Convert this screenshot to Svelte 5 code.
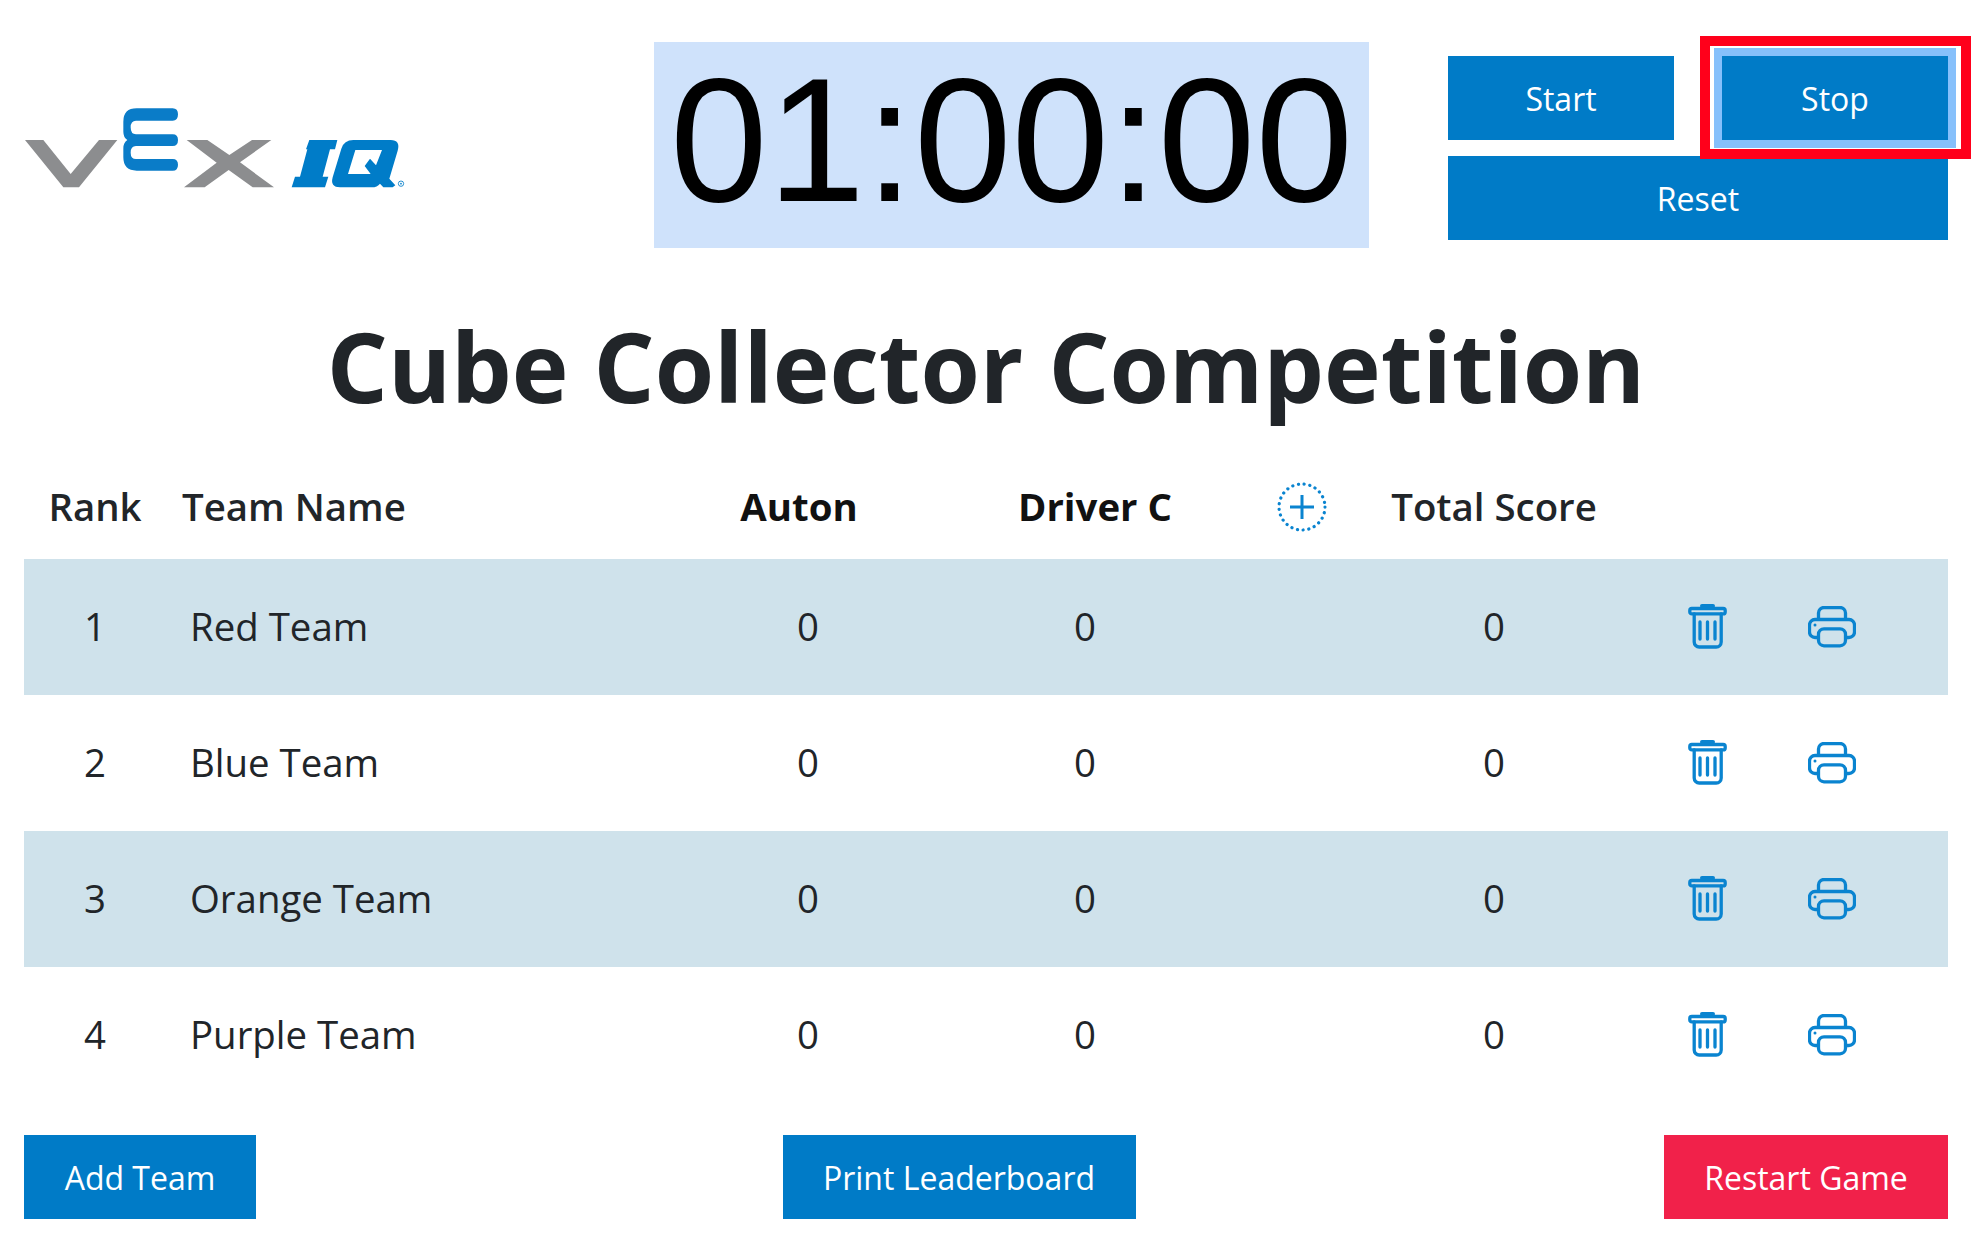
<script>
  const teams = ['Red Team', 'Blue Team', 'Orange Team', 'Purple Team'];
</script>

<main class="page">
  <header class="top">
    <div class="logo">
      <svg width="440" height="140" viewBox="0 0 1320 420" aria-label="VEX IQ">
        <path fill="#8c8d8f" d="M75 180H130L212 282L297 180H352L237 322H190Z" />
        <path fill="#8c8d8f" d="M560 180H622L688 225L756 180H814L720 247L822 322H758L686 270L614 322H552L650 248Z" />
        <path fill="#0a7cc8" d="M518 85Q534 85 534 103Q534 122 518 122H408Q392 122 392 142Q392 163 408 163H518Q534 163 534 180Q534 198 518 198H408Q392 198 392 218Q392 237 408 237H518Q534 237 534 254Q534 272 518 272H410Q370 272 370 232V205Q370 188 382 180Q370 172 370 155V125Q370 85 410 85Z" />
        <path fill="#007cc8" d="M928 180H1012L1005 208H990L968 290H985L975 322H875L885 290H900L922 208H918Z" />
        <path fill="#007cc8" fill-rule="evenodd" d="M1060 180H1172Q1202 180 1193 212L1168 296L1186 316L1178 322H1150L1140 311Q1132 322 1115 322H1020Q990 322 998 292L1024 206Q1032 180 1060 180ZM1066 210L1044 282H1112L1094 258L1110 236L1128 256L1146 210Z" />
        <circle cx="1203" cy="311" r="8" fill="none" stroke="#007cc8" stroke-width="2.5" />
        <circle cx="1203" cy="311" r="2.5" fill="#007cc8" />
      </svg>
    </div>

    <div class="timer">01:00:00</div>

    <div class="controls">
      <button class="btn">Start</button>
      <div class="stop">
        <button class="btn focused">Stop</button>
        <span class="highlight"></span>
      </div>
      <button class="btn wide">Reset</button>
    </div>
  </header>

  <h1>Cube Collector Competition</h1>

  <section class="board">
    <div class="row head">
      <span class="rank">Rank</span>
      <span class="name">Team Name</span>
      <strong class="auton">Auton</strong>
      <strong class="driver">Driver C</strong>
      <span class="plus">
        <svg width="50" height="50" viewBox="0 0 50 50">
          <circle cx="25" cy="25" r="23" fill="none" stroke="#0a84d0" stroke-width="3.2" stroke-linecap="round" stroke-dasharray="0.1 5.68" />
          <path d="M25 13V37M13 25H37" stroke="#0a84d0" stroke-width="3" fill="none" />
        </svg>
      </span>
      <span class="total">Total Score</span>
    </div>

    {#each teams as team, i}
      <div class="row team">
        <span class="rank">{i + 1}</span>
        <span class="name">{team}</span>
        <span class="auton">0</span>
        <span class="driver">0</span>
        <span class="plus"></span>
        <span class="total">0</span>
        <span class="action">
          <svg width="40" height="46" viewBox="0 0 40 46" fill="none" stroke="#0a84d0" stroke-width="3.3" stroke-linecap="round">
            <path d="M14 2H25" stroke-width="4" />
            <rect x="1.8" y="4.5" width="35.4" height="5.4" rx="2" />
            <path d="M6.2 10V38A5 5 0 0 0 11.200 43H28.200A5 5 0 0 0 33.200 38V10" />
            <path d="M12 18V35M19.500 18V35M27 18V35" />
          </svg>
        </span>
        <span class="action">
          <svg width="48" height="42" viewBox="0 0 48 42" fill="none" stroke="#0a84d0" stroke-width="3.3" stroke-linejoin="round">
            <path d="M10.500 13V7A5.500 5.500 0 0 1 16 1.500H32A5.500 5.500 0 0 1 37.500 7V13" />
            <path d="M10 31.500H7A5.500 5.500 0 0 1 1.500 26V19A5.500 5.500 0 0 1 7 13.500H41A5.500 5.500 0 0 1 46.500 19V26A5.500 5.500 0 0 1 41 31.500H38" />
            <rect x="10.500" y="22.800" width="27" height="17" rx="5.500" />
            <circle cx="7" cy="19" r="1.500" fill="#0a84d0" stroke="none" />
          </svg>
        </span>
      </div>
    {/each}
  </section>

  <footer class="bottom">
    <button class="btn add">Add Team</button>
    <button class="btn print">Print Leaderboard</button>
    <button class="btn restart">Restart Game</button>
  </footer>
</main>

<style>
:global(body) {
  margin: 0;
  background: #fff;
}

.page {
  width: 1984px;
  height: 1236px;
  box-sizing: border-box;
  padding: 42px 36px 0 24px;
  font-family: "Open Sans", sans-serif;
  color: #212529;
}

.top {
  display: grid;
  grid-template-columns: 630px 715px 1fr;
  height: 206px;
}

.logo {
  margin-left: -24px;
  padding-top: 38px;
}

.logo svg {
  display: block;
}

.timer {
  background: #cfe2fb;
  color: #000;
  font-family: "Liberation Sans", Arial, sans-serif;
  font-size: 175.5px;
  line-height: 197px;
  height: 206px;
  text-align: center;
}

.controls {
  display: grid;
  grid-template-columns: 226px 226px;
  grid-template-rows: 84px 84px;
  gap: 16px 48px;
  margin-top: 14px;
  margin-left: 79px;
}

.btn {
  display: block;
  border: 0;
  padding: 0;
  height: 84px;
  background: #007bc7;
  color: #fff;
  font-family: inherit;
  font-size: 32px;
  text-align: center;
}

.wide {
  grid-column: 1 / 3;
}

.stop {
  position: relative;
}

.focused {
  width: 100%;
  box-shadow: 0 0 0 8px #86c0fb;
}

.highlight {
  position: absolute;
  inset: -20px -23px -19px -22px;
  border: 10px solid #ff001b;
}

h1 {
  margin: 0;
  padding-top: 61px;
  height: 114px;
  font-size: 96px;
  line-height: 114px;
  font-weight: 700;
  text-align: center;
  width: 1924px;
}

.board {
  margin-top: 40px;
}

.row {
  display: grid;
  grid-template-columns: 142px 512px 260px 294px 139px 246px 182px 66px 1fr;
  align-items: center;
  font-size: 38.4px;
  height: 136px;
}

.head {
  height: 96px;
  box-sizing: border-box;
  padding-bottom: 8px;
  font-weight: 600;
}

.head > :not(.plus),
.team > :not(.action) {
  margin-bottom: 2px;
}

.head strong {
  color: #111;
  font-weight: 700;
}

.team:nth-child(even) {
  background: #cfe2eb;
}

.rank,
.auton,
.driver,
.total,
.plus,
.action {
  text-align: center;
}

.name {
  padding-left: 24px;
}

.head .name {
  padding-left: 16px;
}

.head .auton {
  margin-left: -18px;
}

.head .driver {
  margin-left: 20px;
}

.plus svg,
.action svg {
  display: block;
  margin: 0 auto;
}

.bottom {
  display: flex;
  justify-content: space-between;
  margin-top: 32px;
}

.add {
  width: 232px;
}

.print {
  width: 353px;
  margin-right: 2px;
}

.restart {
  width: 284px;
  background: #f1214a;
}
</style>
